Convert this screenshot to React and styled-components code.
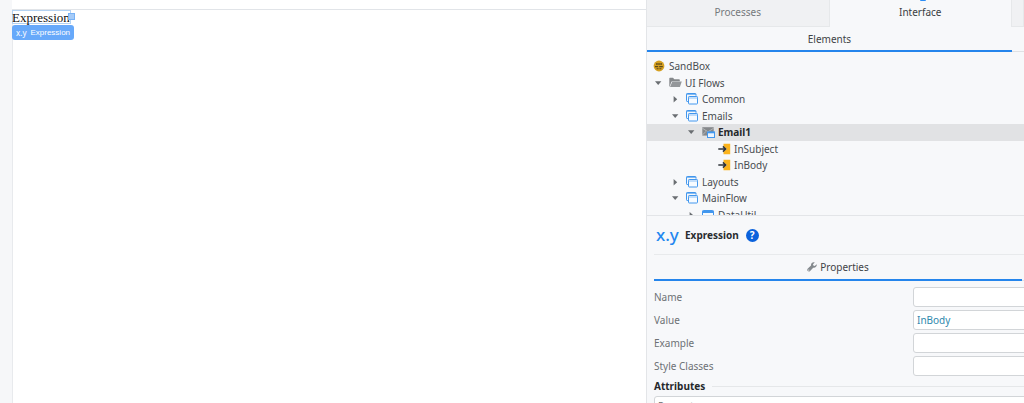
import React from "react";
import styled, { createGlobalStyle } from "styled-components";

const GlobalStyle = createGlobalStyle`
  *, *::before, *::after { box-sizing: border-box; }
  body {
    margin: 0;
    overflow: hidden;
    background: #fff;
    color: #4a4f54;
    font: 10px/16px "Noto Sans", sans-serif;
  }
`;

const Workspace = styled.div`
  display: grid;
  grid-template-columns: 12px minmax(0, 1fr) 378px;
  height: 100vh;
  overflow: hidden;
`;

const Rail = styled.div`
  background: #f6f7f9;
`;

const Editor = styled.main`
  display: flex;
  flex-direction: column;
  padding-top: 9px;
`;

const Page = styled.section`
  flex: 1;
  border-top: 1px solid #e1e4e8;
  box-shadow: inset 1px 0 #e8eaed;
`;

const Widget = styled.div`
  position: relative;
  width: max-content;
  height: 14px;
  padding-right: 1px;
  box-shadow: inset 0 0 0 1px #b4d2f2;
  color: #111;
  font: 13px/16px "Liberation Serif", serif;
`;

const Handle = styled.span`
  position: absolute;
  top: 3px;
  right: -4px;
  width: 7px;
  height: 7px;
  border: 1px solid #78b2f5;
  background: #a5cbf8;
`;

const WidgetTag = styled.div`
  display: flex;
  align-items: center;
  gap: 4px;
  width: max-content;
  height: 15px;
  margin-top: 1px;
  padding: 0 4px;
  border-radius: 3px;
  background: #67a9fa;
  color: #fff;
  font: 8px/15px "Liberation Sans", sans-serif;
`;

const TagSymbol = styled.span`
  font-family: "Noto Sans", sans-serif;
`;

const Side = styled.aside`
  display: flex;
  flex-direction: column;
  min-height: 0;
  overflow: hidden;
  border-left: 1px solid #e3e5e8;
  background: #f7f8fa;
`;

const Tabs = styled.nav`
  display: grid;
  flex: none;
  grid-template-columns: 1fr 1fr 12px;
  height: 27px;
`;

const Tab = styled.button`
  position: relative;
  padding: 0 0 3px;
  border: solid #e6e8ea;
  border-width: ${(p) => (p.$active ? "0 1px 0 0" : "0 1px 1px 0")};
  background: ${(p) => (p.$active ? "#f7f8fa" : "#f0f1f3")};
  color: ${(p) => (p.$active ? "#3a3e42" : "#75797d")};
  font: inherit;
`;

const TabMark = styled.span`
  position: absolute;
  top: 0;
  left: 50%;
  width: 6px;
  height: 1px;
  border-radius: 0 0 2px 2px;
  background: #2b8cf5;
`;

const SubTabs = styled.nav`
  display: grid;
  flex: none;
  grid-template-columns: 1fr ${(p) => p.$rest};
  height: ${(p) => p.$height};
`;

const SubTab = styled.button`
  display: flex;
  align-items: center;
  justify-content: center;
  gap: 3px;
  padding: 0;
  border: 0;
  border-bottom: 2px solid #2585ec;
  background: none;
  color: #3f4347;
  font: inherit;
`;

const SubTabRest = styled.span`
  border-bottom: 1px solid #dfe1e4;
`;

const TreeViewport = styled.div`
  flex: none;
  height: 164px;
  padding-top: 6px;
  overflow: hidden;
  border-bottom: 1px solid #e3e5e8;
`;

const Tree = styled.ul`
  display: grid;
  grid-auto-rows: 1fr;
  height: 165px;
  margin: 0;
  padding: 0;
  list-style: none;
`;

const TreeRow = styled.li`
  display: flex;
  align-items: center;
  padding-left: ${(p) => p.$indent}px;
  background: ${(p) => (p.$selected ? "#e1e2e4" : "transparent")};
  color: ${(p) => (p.$selected ? "#25282b" : "#484c50")};
  font-weight: ${(p) => (p.$selected ? 700 : 400)};
  white-space: nowrap;
`;

const Arrow = styled.span`
  display: flex;
  flex: none;
  width: 15px;
`;

const NodeIcon = styled.span`
  display: flex;
  flex: none;
  width: ${(p) => p.$width}px;
`;

const PropsHeader = styled.header`
  display: flex;
  flex: none;
  align-items: center;
  height: 39px;
  margin-left: 7px;
  padding-left: 2px;
  border-bottom: 1px solid #e8eaec;
`;

const Symbol = styled.span`
  width: 29px;
  color: #2387f0;
  font-size: 17px;
  font-weight: 500;
  line-height: 20px;
`;

const Title = styled.h2`
  margin: 0 7px 0 0;
  color: #292c2f;
  font: inherit;
  font-weight: 700;
`;

const Help = styled.button`
  width: 13px;
  height: 13px;
  padding: 0;
  border: 0;
  border-radius: 50%;
  background: #0b62dc;
  color: #fff;
  font: 700 10px/13px "Noto Sans", sans-serif;
`;

const PropsTabs = styled.div`
  flex: none;
  margin-left: 7px;
`;

const Fields = styled.form`
  display: grid;
  grid-template-columns: 259px minmax(0, 1fr);
  row-gap: 3px;
  align-items: center;
  margin: 6px -4px 0 7px;
`;

const Label = styled.label`
  color: #6d7175;
`;

const Input = styled.input`
  width: 100%;
  height: 20px;
  padding: 0 3px;
  border: 1px solid #d2d5d8;
  border-radius: 3px;
  background: #fff;
  color: #2f88ad;
  font: inherit;
`;

const GroupTitle = styled.h3`
  display: flex;
  grid-column: 1 / -1;
  align-items: center;
  gap: 7px;
  height: 14px;
  margin: 0;
  color: #25282b;
  font: inherit;
  font-weight: 700;

  &::after {
    flex: 1;
    height: 1px;
    background: #e5e7e9;
    content: "";
  }
`;

const Select = styled.select`
  grid-column: 1 / -1;
  width: 100%;
  height: 20px;
  padding: 0 3px;
  border: 1px solid #d2d5d8;
  border-radius: 3px;
  background: #fff;
  color: #6d7175;
  font: inherit;
  appearance: none;
`;

const Down = () => (
  <svg width="8" height="6" viewBox="0 0 8 6"><path d="M1 1.2h6.400L4.200 5z" fill="#6a6e72" /></svg>
);

const Right = () => (
  <svg width="8" height="8" viewBox="0 0 8 8"><path d="M2.600 1 6.200 4.200 2.600 7.400z" fill="#6a6e72" /></svg>
);

const ModuleIcon = () => (
  <svg width="12" height="12" viewBox="0 0 12 12">
    <circle cx="6" cy="6" r="5.4" fill="#d6a021" />
    <path d="M3 3.200h6v1.500H3zM2 5.900h3.200v1.300H2zM6.200 5.900h3.600v1.300H6.200zM3.600 8.200h2v1H3.600zM6.400 8.200h2v1h-2z" fill="#5c4a1a" />
    <path d="M5 3.200v1.500M7.200 3.200v1.500" stroke="#d6a021" strokeWidth=".5" />
  </svg>
);

const FolderIcon = () => (
  <svg width="13" height="11" viewBox="0 0 13 11">
    <path d="M.3 9.600V1.500q0-.7.7-.7h3l1.300 1.500h4.800q.7 0 .7.700v1.200H3.300q-.7 0-1 .7L.6 9.800z" fill="#85888b" />
    <path d="M3.300 4.500h9.500L10.900 10H1z" fill="#94979a" />
  </svg>
);

const FlowIcon = () => (
  <svg width="12" height="12" viewBox="0 0 12 12" fill="none" stroke="#4297ee">
    <path d="M2.400 8.500H1.200q-.7 0-.7-.7V1.200q0-.7.700-.7h8.100q.7 0 .7.700v1.500" />
    <path d="M.5 1.300h9.500" strokeWidth=".8" />
    <rect x="2.500" y="3.500" width="9" height="7.500" rx=".7" fill="#f7fbff" />
    <path d="M2.500 5h9" stroke="#8cc0f6" />
  </svg>
);

const ScreenIcon = () => (
  <svg width="12" height="12" viewBox="0 0 12 12" fill="none" stroke="#4297ee">
    <rect x=".5" y="1.5" width="11" height="9" rx=".7" fill="#f7fbff" />
    <path d="M.5 3h11" strokeWidth="2" />
  </svg>
);

const EmailIcon = () => (
  <svg width="13" height="12" viewBox="0 0 13 12">
    <path d="M.3 1.200h11.400v8.400H.3z" fill="#85888b" />
    <path d="m.3 2.200 5.700 3.600 5.700-3.600M.3 9l3.600-3.400" fill="none" stroke="#c6c8ca" strokeWidth=".7" />
    <rect x="5.500" y="6" width="7" height="5.500" fill="#eaf4ff" stroke="#4297ee" />
    <path d="M5 6.500h8" stroke="#4297ee" strokeWidth="1.600" />
  </svg>
);

const InputIcon = () => (
  <svg width="13" height="12" viewBox="0 0 13 12">
    <path d="M5.500.8h6.700v10.400H5.500V8.800L9 6 5.500 3.200z" fill="#fbb31c" />
    <path d="M.3 6h7M4.900 3.400 7.700 6 4.900 8.600" fill="none" stroke="#30343a" strokeWidth="1.500" />
  </svg>
);

const WrenchIcon = () => (
  <svg width="10" height="10" viewBox="0 0 10 10">
    <path d="M9.600 2.200 7.800 3.900 6.300 3.600 6 2.200 7.700.5C5.800-.2 3.800 1.200 4 3.400L.6 6.800Q-.1 8 .7 9.100q1.100.9 2.200.1l3.300-3.500C8.600 6.200 10.300 4.200 9.600 2.200zM1.800 7.500a.6.6 0 1 1 0 1.200.6.6 0 0 1 0-1.200z" fill="#858a8e" />
  </svg>
);

const icons = {
  module: ModuleIcon,
  folder: FolderIcon,
  flow: FlowIcon,
  screen: ScreenIcon,
  email: EmailIcon,
  input: InputIcon,
};

const nodes = [
  { name: "SandBox", icon: "module", indent: 6 },
  { name: "UI Flows", icon: "folder", indent: 7 },
  { name: "Common", icon: "flow", indent: 24, arrow: "right" },
  { name: "Emails", icon: "flow", indent: 24, arrow: "down" },
  { name: "Email1", icon: "email", indent: 40, arrow: "down", selected: true },
  { name: "InSubject", icon: "input", indent: 71 },
  { name: "InBody", icon: "input", indent: 71 },
  { name: "Layouts", icon: "flow", indent: 24, arrow: "right" },
  { name: "MainFlow", icon: "flow", indent: 24, arrow: "down" },
  { name: "DataUtil", icon: "screen", indent: 40, arrow: "right" },
].map((node) => (node.icon === "folder" ? { ...node, arrow: "down" } : node));

const fields = [
  { id: "name", label: "Name", value: "" },
  { id: "value", label: "Value", value: "InBody" },
  { id: "example", label: "Example", value: "" },
  { id: "classes", label: "Style Classes", value: "" },
];

function TreeNode({ node }) {
  const Icon = icons[node.icon];
  return (
    <TreeRow $indent={node.indent} $selected={node.selected}>
      {node.arrow && <Arrow>{node.arrow === "down" ? <Down /> : <Right />}</Arrow>}
      <NodeIcon $width={16}><Icon /></NodeIcon>
      {node.name}
    </TreeRow>
  );
}

export default function App() {
  return (
    <>
      <GlobalStyle />
      <Workspace>
        <Rail />
        <Editor>
          <Page>
            <Widget>Expression<Handle /></Widget>
            <WidgetTag><TagSymbol>x.y</TagSymbol>Expression</WidgetTag>
          </Page>
        </Editor>
        <Side>
          <Tabs>
            <Tab type="button">Processes</Tab>
            <Tab type="button" $active>Interface<TabMark /></Tab>
            <Tab type="button" aria-label="More" />
          </Tabs>
          <SubTabs $rest="12px" $height="25px">
            <SubTab type="button">Elements</SubTab>
            <SubTabRest />
          </SubTabs>
          <TreeViewport>
            <Tree>
              {nodes.map((node) => <TreeNode key={node.name} node={node} />)}
            </Tree>
          </TreeViewport>
          <PropsHeader>
            <Symbol>x.y</Symbol>
            <Title>Expression</Title>
            <Help type="button">?</Help>
          </PropsHeader>
          <PropsTabs>
            <SubTabs $rest="2px" $height="26px">
              <SubTab type="button"><WrenchIcon />Properties</SubTab>
              <SubTabRest />
            </SubTabs>
          </PropsTabs>
          <Fields>
            {fields.map((field) => (
              <React.Fragment key={field.id}>
                <Label htmlFor={field.id}>{field.label}</Label>
                <Input id={field.id} defaultValue={field.value} />
              </React.Fragment>
            ))}
            <GroupTitle>Attributes</GroupTitle>
            <Select aria-label="Attribute">
              <option>Property</option>
            </Select>
          </Fields>
        </Side>
      </Workspace>
    </>
  );
}
